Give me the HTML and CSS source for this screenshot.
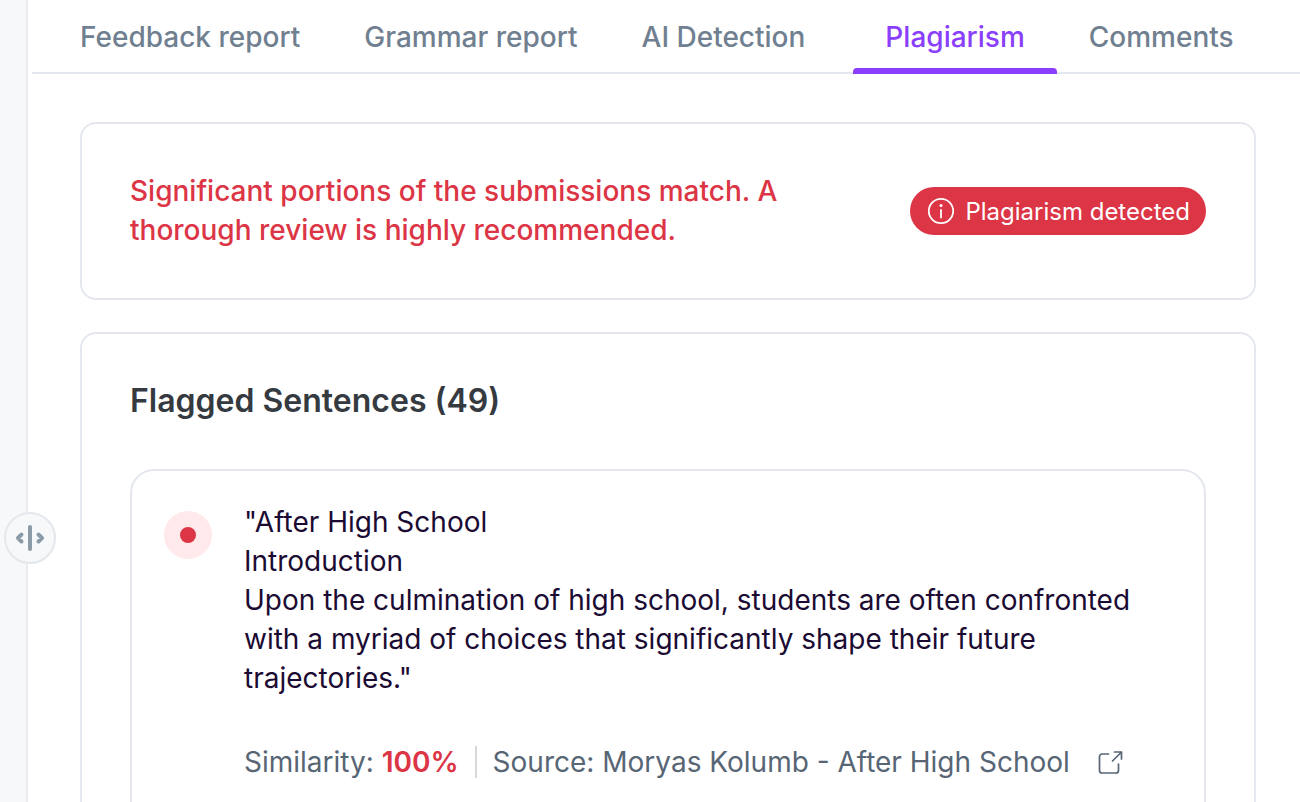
FILE: index.html
```html
<!DOCTYPE html>
<html lang="en">
  <head>
    <meta charset="UTF-8" />
    <meta name="viewport" content="width=device-width, initial-scale=1.0" />
    <title>Plagiarism report</title>
    <link rel="stylesheet" href="styles.css">
  </head>
  <body>
    <aside class="sidebar">
      <button class="resize-handle" type="button" aria-label="Resize panel">
        <svg width="30" height="26" viewBox="0 0 30 26" fill="none" stroke="#8c9ba8" stroke-width="4" stroke-linecap="round" stroke-linejoin="round">
          <path d="M15 2v22" />
          <path d="M6.500 9.500L3 13l3.500 3.500M23.500 9.500L27 13l-3.500 3.500" />
        </svg>
      </button>
    </aside>

    <main class="report">
      <nav class="tabs">
        <a href="#feedback">Feedback report</a>
        <a href="#grammar">Grammar report</a>
        <a href="#ai">AI Detection</a>
        <a href="#plagiarism" class="active">Plagiarism</a>
        <a href="#comments">Comments</a>
      </nav>

      <div class="content">
        <section class="card summary">
          <p>Significant portions of the submissions match. A thorough review is highly recommended.</p>
          <span class="badge">
            <svg width="28" height="28" viewBox="0 0 28 28" fill="none" stroke="#fff" stroke-width="1.8">
              <circle cx="15" cy="14" r="12.2" />
              <path d="M15 13v7.5" stroke-linecap="round" />
              <circle cx="15" cy="8.5" r="1.5" fill="#fff" stroke="none" />
            </svg>
            Plagiarism detected
          </span>
        </section>

        <section class="card flagged">
          <h2>Flagged Sentences (49)</h2>
          <article class="sentence">
            <span class="dot"></span>
            <div class="sentence__body">
              <p>"After High School<br>Introduction<br>Upon the culmination of high school, students are often confronted with a myriad of choices that significantly shape their future trajectories."</p>
              <div class="sentence__meta">
                <span class="similarity">Similarity: <strong>100%</strong></span>
                <span class="source">Source: Moryas Kolumb - After High School</span>
                <a href="#source" aria-label="Open source">
                  <svg width="26" height="26" viewBox="0 0 26 26" fill="none" stroke="#576575" stroke-width="1.7" stroke-linecap="round" stroke-linejoin="round">
                    <path d="M10.500 5H4a2.500 2.500 0 0 0-2.500 2.500V21.500A2.500 2.500 0 0 0 4 24h14a2.500 2.500 0 0 0 2.500-2.500V15" />
                    <path d="M16.500 3H23.500v7M23.500 3l-9 9" />
                  </svg>
                </a>
              </div>
            </div>
          </article>
        </section>
      </div>
    </main>
  </body>
</html>
```

FILE: styles.css
```css
* {
  box-sizing: border-box;
}
body {
  font-family: Inter, "Liberation Sans", sans-serif;
  font-size: 28px;
  line-height: 39px;
  margin: 0;
  display: flex;
  height: 100vh;
  overflow: hidden;
  background: #fff;
}
p,
h2 {
  margin: 0;
}
svg {
  display: block;
}
.sidebar {
  position: relative;
  flex: none;
  width: 28px;
  background: #f6f8fa;
  border-right: 2px solid #e9ebee;
}
.resize-handle {
  position: absolute;
  top: 512px;
  left: 4px;
  width: 52px;
  height: 52px;
  padding: 0;
  display: flex;
  align-items: center;
  justify-content: center;
  background: #f6f8fa;
  border: 2px solid #e4e8ed;
  border-radius: 50%;
  cursor: col-resize;
}
.report {
  flex: 1;
  min-width: 0;
  padding-left: 4px;
}
.tabs {
  display: flex;
  height: 74px;
  padding-left: 16px;
  border-bottom: 2px solid #e4e8ee;
}
.tabs a {
  height: 74px;
  padding: 18px 32px 0;
  color: #708090;
  font-weight: 500;
  text-decoration: none;
  white-space: nowrap;
}
.tabs a.active {
  position: relative;
  margin-left: 16px;
  color: #8a3ffc;
}
.tabs a.active::after {
  content: "";
  position: absolute;
  left: 0;
  right: 0;
  bottom: 0;
  height: 6px;
  border-radius: 4px 4px 0 0;
  background: #8a3ffc;
}
.content {
  display: flex;
  flex-direction: column;
  gap: 32px;
  padding: 48px 44px 0 48px;
}
.card {
  border: 2px solid #e4e8ee;
  border-radius: 16px;
  padding: 48px;
}
.summary {
  display: flex;
  align-items: center;
  justify-content: space-between;
  gap: 48px;
  color: #dc3545;
  font-weight: 500;
}
.summary p {
  max-width: 680px;
}
.badge {
  display: flex;
  align-items: center;
  flex: none;
  gap: 11px;
  height: 48px;
  padding: 0 16px;
  border-radius: 24px;
  background: #dc3545;
  color: #fff;
  font-size: 24px;
  font-weight: 400;
}
.flagged h2 {
  color: #343a40;
  font-size: 32px;
  font-weight: 600;
  line-height: 38px;
  margin-bottom: 49px;
}
.sentence {
  display: flex;
  gap: 32px;
  padding: 32px 32px 48px;
  border: 2px solid #e4e8ee;
  border-radius: 24px;
  color: #1b0b33;
}
.dot {
  flex: none;
  width: 48px;
  height: 48px;
  margin-top: 8px;
  border: 16px solid #ffe9ea;
  border-radius: 50%;
  background: #dc3545;
}
.sentence__meta {
  display: flex;
  align-items: center;
  margin-top: 48px;
  color: #576575;
  line-height: 32px;
  white-space: nowrap;
}
.similarity strong {
  color: #dc3545;
  font-weight: 600;
}
.source {
  margin: 0 28px 0 16px;
  padding-left: 16px;
  border-left: 2px solid #d5d7da;
}
```
